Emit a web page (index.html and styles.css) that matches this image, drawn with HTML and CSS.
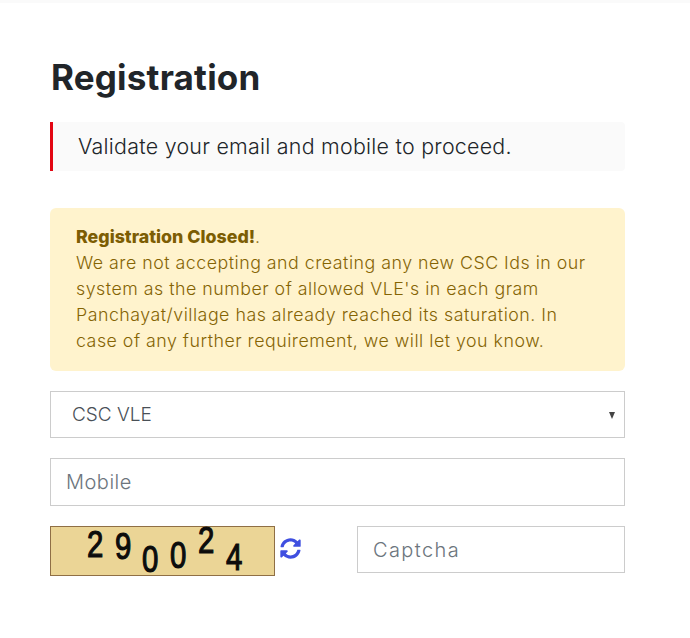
FILE: index.html
```html
<!DOCTYPE html>
<html lang="en">
<head>
    <meta charset="UTF-8">
    <meta name="viewport" content="width=device-width, initial-scale=1.0">
    <title>Registration</title>
    <link rel="stylesheet" href="styles.css">
</head>
<body>
    <div class="container">
        <h1>Registration</h1>

        <div class="notice">Validate your email and mobile to proceed.</div>

        <div class="alert">
            <strong>Registration Closed!</strong>.<br>
            We are not accepting and creating any new CSC Ids in our<br>
            system as the number of allowed VLE's in each gram<br>
            Panchayat/village has already reached its saturation. In<br>
            case of any further requirement, we will let you know.
        </div>

        <div class="select-wrap">
            <select class="field field-select">
                <option>CSC VLE</option>
            </select>
        </div>

        <input class="field field-mobile" type="text" placeholder="Mobile">

        <div class="captcha-row">
            <svg class="captcha-img" viewBox="0 0 225 50" role="img" aria-label="captcha">
                <rect x="0.5" y="0.5" width="224" height="49" fill="#ebd596" stroke="#8f6f45"/>
                <g class="captcha-digits">
                    <text transform="translate(37 31) scale(1.05 1.35)">2</text>
                    <text transform="translate(65 33) scale(1.05 1.35)">9</text>
                    <text transform="translate(92 46) scale(1.05 1.35)">0</text>
                    <text transform="translate(120 42) scale(1.05 1.35)">0</text>
                    <text transform="translate(148 27) scale(1.05 1.35)">2</text>
                    <text transform="translate(176 44) scale(1.05 1.35)">4</text>
                </g>
            </svg>
            <svg class="refresh-icon" viewBox="0 0 512 512" aria-hidden="true">
                <path d="M370.72 133.28C339.458 104.008 298.888 87.962 255.848 88c-77.458.068-144.328 53.178-162.791 126.85-1.344 5.363-6.122 9.15-11.651 9.15H24.103c-7.498 0-13.194-6.807-11.807-14.176C33.933 94.924 134.813 8 256 8c66.448 0 126.791 26.136 171.315 68.685L463.03 40.97C478.149 25.851 504 36.559 504 57.941V192c0 13.255-10.745 24-24 24H345.941c-21.382 0-32.09-25.851-16.971-40.971l41.75-41.749zM32 296h134.059c21.382 0 32.09 25.851 16.971 40.971l-41.75 41.75c31.262 29.273 71.835 45.319 114.876 45.28 77.418-.07 144.315-53.144 162.787-126.849 1.344-5.363 6.122-9.15 11.651-9.15h57.304c7.498 0 13.194 6.807 11.807 14.176C478.067 417.076 377.187 504 256 504c-66.448 0-126.791-26.136-171.315-68.685L48.97 471.03C33.851 486.149 8 475.441 8 454.059V320c0-13.255 10.745-24 24-24z"/>
            </svg>
            <input class="field field-captcha" type="text" placeholder="Captcha">
        </div>
    </div>
</body>
</html>
```

FILE: styles.css
```css
* {
    box-sizing: border-box;
}

body {
    font-family: 'Inter', 'Liberation Sans', sans-serif;
    background: #fff;
    border-top: 3px solid #fafafa;
    margin: 0;
    color: #212529;
}

.container {
    width: 575px;
    margin-left: 50px;
    padding-top: 54px;
}

h1 {
    font-size: 35px;
    font-weight: 700;
    line-height: 40px;
    letter-spacing: 0.2px;
    margin: 0 0 25px;
    padding-left: 1px;
    color: #212529;
}

.notice {
    height: 49px;
    padding-left: 25px;
    border-left: 3px solid #e30613;
    border-radius: 0 4px 4px 0;
    background: #fafafa;
    font-size: 21.4px;
    font-weight: 300;
    letter-spacing: 0.26px;
    line-height: 48px;
    margin-bottom: 37px;
}

.alert {
    background: #fff3cd;
    border-radius: 6px;
    padding: 16px 26px 6px;
    height: 163px;
    color: #856404;
    font-size: 17.8px;
    font-weight: 300;
    letter-spacing: 0.5px;
    line-height: 26px;
    margin-bottom: 20px;
}

.alert strong {
    font-weight: 800;
    letter-spacing: 0;
    color: #7c5d03;
}

.field {
    display: block;
    width: 100%;
    border: 1px solid #ccc;
    border-radius: 0;
    background: #fff;
    font-family: inherit;
    font-size: 19px;
    font-weight: 300;
    color: #495057;
    outline: none;
}

.field::placeholder {
    color: #6c757d;
    opacity: 1;
}

.select-wrap {
    position: relative;
    margin-bottom: 20px;
}

.select-wrap::after {
    content: "";
    position: absolute;
    right: 10px;
    top: 21px;
    border-left: 3.5px solid transparent;
    border-right: 3.5px solid transparent;
    border-top: 7px solid #444;
}

.field-select {
    height: 47px;
    padding-left: 21px;
    appearance: none;
}

.field-mobile {
    height: 48px;
    padding-left: 15px;
    font-size: 20px;
    letter-spacing: 0.5px;
    margin-bottom: 20px;
}

.captcha-row {
    display: flex;
    align-items: flex-start;
}

.captcha-img {
    width: 225px;
    height: 50px;
    flex: none;
    overflow: visible;
}

.captcha-digits text {
    font-family: 'Liberation Sans', sans-serif;
    font-size: 28px;
    fill: #0c0c0c;
    stroke: #0c0c0c;
    stroke-width: 0.9px;
}

.refresh-icon {
    width: 21px;
    height: 21px;
    margin: 12px 0 0 5px;
    flex: none;
    fill: #3f4fe0;
}

.field-captcha {
    width: 268px;
    height: 47px;
    margin-left: auto;
    padding-left: 15px;
    font-size: 20px;
    letter-spacing: 1.4px;
}
```
